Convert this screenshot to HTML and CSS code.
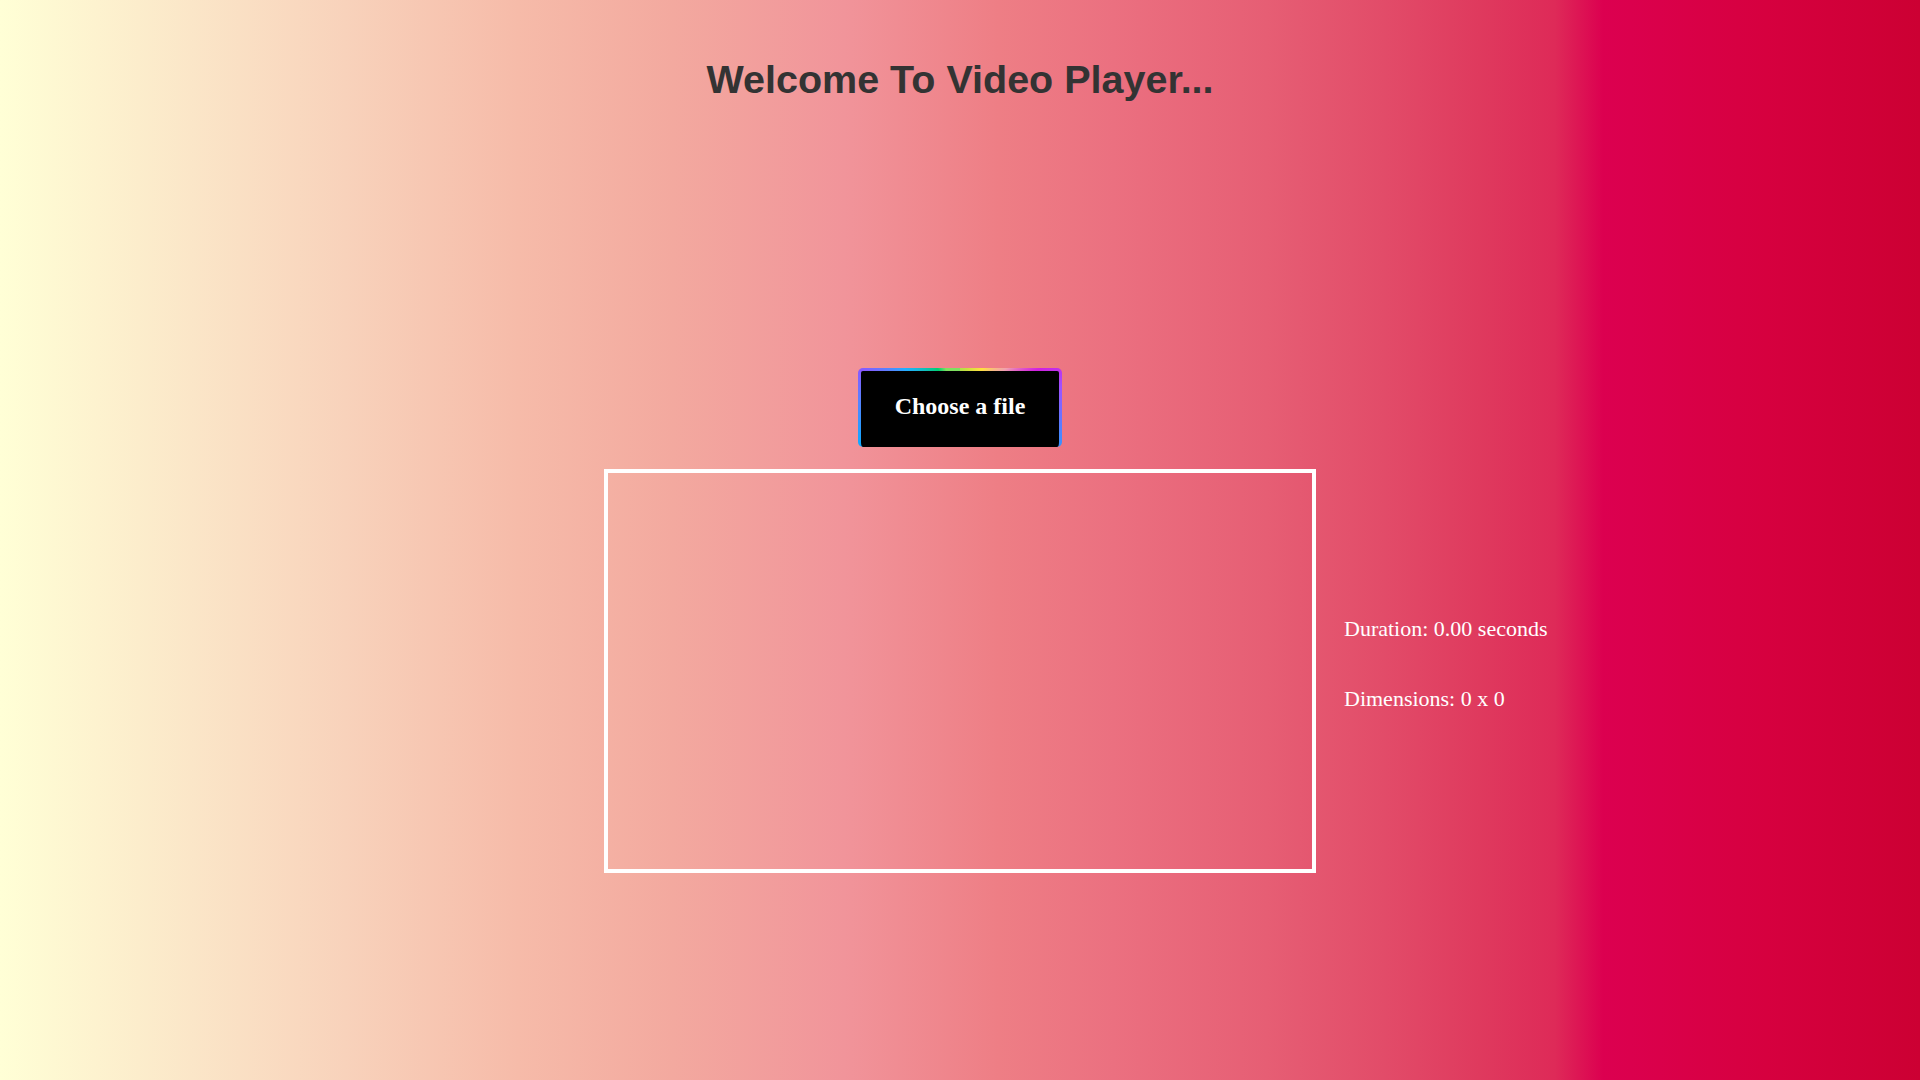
FILE: index.html
```html
<!DOCTYPE html>
<html lang="en">
<head>
<meta charset="UTF-8">
<title>Video Player</title>
<link rel="stylesheet" href="styles.css">
</head>
<body>
<main class="page">
  <h1 class="title">Welcome To Video Player...</h1>
  <label class="file-btn">Choose a file</label>
  <section class="player-row">
    <div class="spacer"></div>
    <div class="video-box"></div>
    <div class="info">
      <p class="info-line">Duration: 0.00 seconds</p>
      <p class="info-line">Dimensions: 0 x 0</p>
    </div>
  </section>
</main>
</body>
</html>
```

FILE: styles.css
```css
html, body {
  margin: 0;
  padding: 0;
  height: 100%;
}
body {
  background: linear-gradient(to right,
    #ffffd6 0%,
    #fbe6c8 10%,
    #f8d2bb 18%,
    #f6bba9 27%,
    #f3a99f 35%,
    #f1949a 44%,
    #ee7e85 52%,
    #eb7080 58%,
    #e65e74 66%,
    #e24c69 72%,
    #df3a5e 77%,
    #de2a58 81%,
    #dc0050 83.5%,
    #d6003f 92%,
    #cc0033 100%);
  font-family: "Liberation Serif", "Times New Roman", serif;
}
.page {
  display: flex;
  flex-direction: column;
  align-items: center;
}
.title {
  margin: 56px 0 0;
  font-family: "Liberation Sans", Arial, sans-serif;
  font-weight: bold;
  font-size: 39.5px;
  line-height: 46px;
  color: #333333;
}
.file-btn {
  margin-top: 266px;
  box-sizing: border-box;
  width: 204px;
  height: 79px;
  padding-bottom: 5px;
  display: flex;
  align-items: center;
  justify-content: center;
  border: 3px solid transparent;
  border-bottom-width: 0;
  border-radius: 5px;
  background:
    linear-gradient(#000, #000) padding-box,
    conic-gradient(from 0deg,
      #7fe060 -20deg,
      #c8e040 10deg,
      #ffe040 30deg,
      #f0a0b0 50deg,
      #d020e0 64deg,
      #a050ff 78deg,
      #3a90ff 110deg,
      #10a8ff 180deg,
      #10a8ff 250deg,
      #5a80ff 275deg,
      #8a58ff 291deg,
      #20b0ff 305deg,
      #00d070 330deg,
      #7fe060 340deg) border-box;
  color: #ffffff;
  font-family: "Liberation Serif", "Times New Roman", serif;
  font-weight: bold;
  font-size: 24px;
  cursor: pointer;
}
.player-row {
  margin-top: 22px;
  width: 100%;
  display: grid;
  grid-template-columns: 1fr auto 1fr;
}
.video-box {
  width: 704px;
  height: 396px;
  border: 4px solid #ffffff;
}
.info {
  padding-left: 28px;
  padding-top: 148px;
  color: #ffffff;
}
.info-line {
  margin: 0 0 46px;
  font-size: 22px;
  line-height: 24px;
}
```
